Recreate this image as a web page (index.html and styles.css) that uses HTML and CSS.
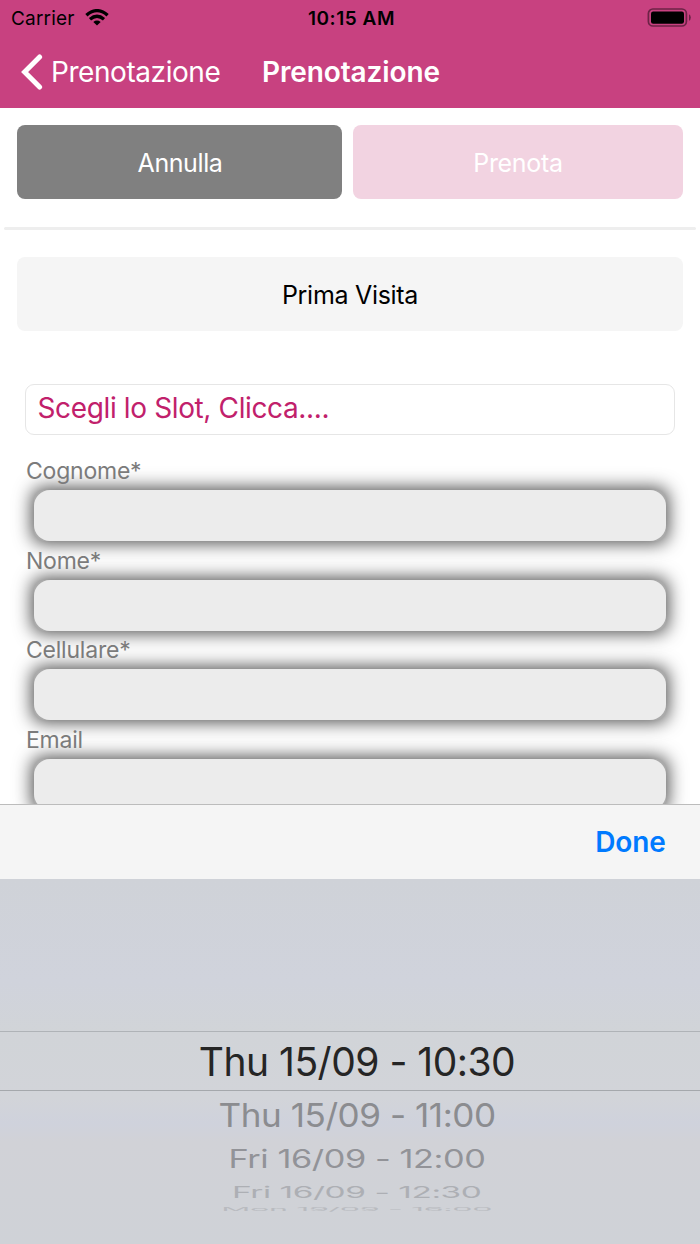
FILE: index.html
```html
<!DOCTYPE html>
<html lang="it">
<head>
<meta charset="utf-8">
<title>Prenotazione</title>
<link rel="stylesheet" href="styles.css">
</head>
<body>
<div class="screen">
  <header class="header">
    <div class="status">
      <div class="carrier"><span class="carrier-name">Carrier</span>
        <svg class="wifi" width="24" height="17" viewBox="0 0 24 17"><g fill="none" stroke="#000" stroke-width="3.3"><path d="M1.4 6.3Q12-3 22.6 6.3"/><path d="M5 10.2Q12 4.2 19 10.2"/></g><path d="M8.3 13Q12 10.1 15.7 13L12 16.6Z"/></svg>
      </div>
      <span class="clock">10:15 AM</span>
      <svg class="battery" width="44" height="20" viewBox="0 0 44 20"><rect x="1.4" y="1" width="38" height="17" rx="4.5" fill="none" stroke="#6c2346" stroke-width="1.7"/><rect x="4" y="3.5" width="33" height="12.3" rx="2.2"/><path d="M42 6.3Q43.8 7 43.8 9.5T42 12.7Z" fill="#6c2346"/></svg>
    </div>
    <nav class="nav">
      <svg class="chevron" width="22" height="37" viewBox="0 0 22 37"><path d="M18.6 3L3.6 18 18.6 33" fill="none" stroke="#fff" stroke-width="5" stroke-linecap="round"/></svg>
      <span class="back">Prenotazione</span>
      <span class="title">Prenotazione</span>
    </nav>
  </header>
  <main class="content">
    <div class="actions">
      <div class="button cancel"><span>Annulla</span></div>
      <div class="button book"><span>Prenota</span></div>
    </div>
    <div class="divider"></div>
    <div class="button visit"><span>Prima Visita</span></div>
    <div class="slot"><span>Scegli lo Slot, Clicca....</span></div>
    <form class="form">
      <div class="field"><label class="label">Cognome*</label><div class="box"><div class="input"></div></div></div>
      <div class="field"><label class="label">Nome*</label><div class="box"><div class="input"></div></div></div>
      <div class="field"><label class="label">Cellulare*</label><div class="box"><div class="input"></div></div></div>
      <div class="field"><label class="label">Email</label><div class="box"><div class="input"></div></div></div>
    </form>
  </main>
  <section class="sheet">
    <div class="toolbar"><span class="done">Done</span></div>
    <div class="picker">
      <div class="row r1"><span>Thu 15/09 - 10:30</span></div>
      <div class="row r2"><span>Thu 15/09 - 11:00</span></div>
      <div class="row r3"><span>Fri 16/09 - 12:00</span></div>
      <div class="row r4"><span>Fri 16/09 - 12:30</span></div>
      <div class="row r5"><span>Mon 19/09 - 16:00</span></div>
    </div>
  </section>
</div>
</body>
</html>
```
FILE: styles.css
```css
* { box-sizing: border-box; }
body { margin: 0; font-family: Inter, "Liberation Sans", sans-serif; }
.screen { width: 700px; height: 1244px; overflow: hidden; display: flex; flex-direction: column; background: #fff; }
.header { height: 108px; flex: none; background: #c84180; }
.status { height: 36px; display: grid; grid-template-columns: 1fr auto 1fr; align-items: center; padding: 0 9px 0 11px; font-size: 19px; }
.carrier { display: flex; align-items: center; gap: 10px; }
.carrier-name { letter-spacing: 0.2px; }
.wifi { margin-top: -1px; }
.clock { font-weight: 600; letter-spacing: 0.55px; padding-left: 1px; }
.battery { justify-self: end; margin-top: -1px; }
.nav { height: 72px; display: flex; align-items: center; padding-left: 21px; font-size: 28px; line-height: 40px; color: #fff; white-space: nowrap; }
.back { width: 211px; margin-left: 8px; letter-spacing: -0.43px; }
.title { font-weight: 600; letter-spacing: -0.12px; }
.content { height: 696px; flex: none; overflow: hidden; padding-top: 17px; }
.actions { display: grid; grid-template-columns: 325px 330px; gap: 11px; margin: 0 17px; }
.button { height: 74px; border-radius: 8px; display: flex; align-items: center; justify-content: center; padding-top: 1px; font-size: 25px; letter-spacing: -0.3px; }
.cancel { background: #808080; color: #fff; letter-spacing: -0.4px; padding-left: 1px; }
.book { background: #f2d3e1; color: #fff; }
.divider { height: 3px; margin: 28px 4px 0; border-radius: 2px; background: #eeeeee; }
.visit { margin: 27px 17px 0; background: #f5f5f5; color: #000; }
.slot { height: 51px; margin: 53px 25px 0; border: 1.5px solid #e6e6e6; border-radius: 9px; padding: 0 12px 3px 11.5px; display: flex; align-items: center; font-size: 28px; letter-spacing: -0.37px; color: #c1206b; }
.form { padding-top: 21px; }
.field { height: 89.6px; }
.label { display: block; height: 34px; padding-left: 26px; font-size: 23px; line-height: 30px; letter-spacing: -0.22px; color: #7b7b7b; position: relative; z-index: 1; }
.box { height: 51px; margin: 0 34px; border-radius: 9px; background: #aaa; box-shadow: 0 0 18px 2px rgba(0, 0, 0, 0.72); }
.input { height: 51px; border-radius: 16px; background: #ececec; }
.sheet { flex: 1; position: relative; z-index: 2; }
.toolbar { height: 75px; border-top: 1px solid #bcbcbc; background: #f5f5f5; display: flex; align-items: center; justify-content: flex-end; padding-right: 34.5px; font-size: 28px; font-weight: 600; letter-spacing: -0.2px; color: #007aff; }
.picker { height: 365px; padding-top: 152px; background: linear-gradient(#cfd2d8 0%, #d0d3dc 28%, #d1d4d8 42%, #d2d4d9 60%, #cfd2dc 67%, #d1d2d7 72%, #cfd2d7 100%); font-size: 39px; letter-spacing: -0.5px; white-space: nowrap; overflow: hidden; }
.row { display: flex; align-items: center; justify-content: center; padding-left: 14px; }
.r1 { height: 60px; border-top: 1.5px solid #afb3b7; border-bottom: 1.5px solid #a5a8ac; color: #252525; }
.r2 { height: 46px; color: #8b8c90; }
.r3 { height: 43px; color: #929398; }
.r4 { height: 24px; color: #adafb4; }
.r5 { height: 8px; color: #b9bbc0; }
.r2 span { transform: scale(0.899, 0.84); }
.r3 span { transform: scale(0.88, 0.65); }
.r4 span { transform: scale(0.856, 0.41); }
.r5 span { transform: scale(0.827, 0.14); }
```
